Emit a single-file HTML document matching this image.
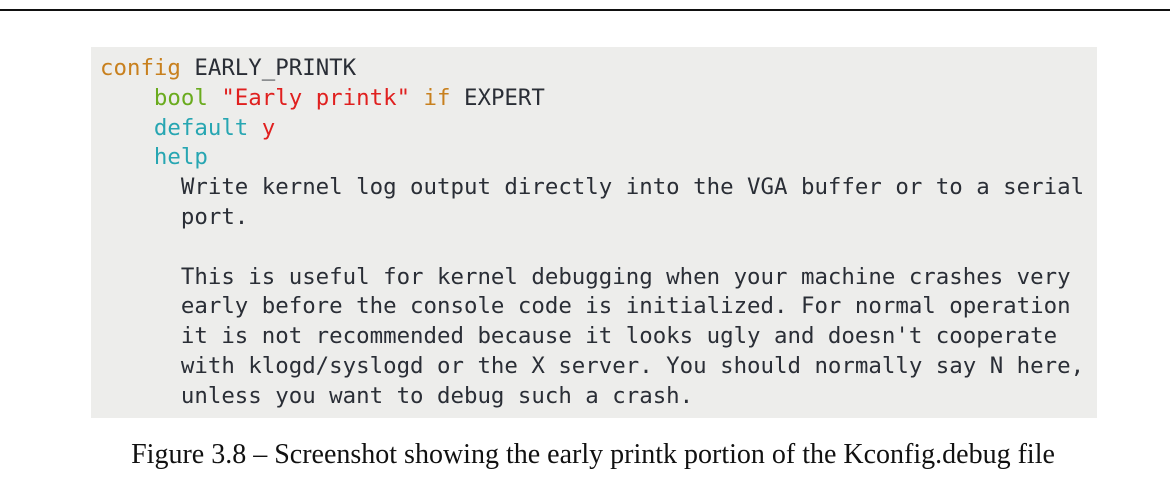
<!DOCTYPE html>
<html><head><style>
body{margin:0;width:1170px;height:477px;background:#fff;position:relative;overflow:hidden}
.line{position:absolute;left:0;top:9px;width:1170px;height:2px;background:#111}
.box{position:absolute;left:91px;top:47px;width:1006px;height:371px;background:#ededeb}
pre{position:absolute;left:100px;top:54px;margin:0;font-family:"DejaVu Sans Mono","Liberation Mono",monospace;font-size:22.4px;line-height:29.8px;color:#2a2e36}
.o{color:#c8801e}.g{color:#6aab1e}.r{color:#e0201f}.t{color:#27a6b2}
.cap{position:absolute;left:0;width:1186px;top:439px;text-align:center;font-family:"Liberation Serif",serif;font-size:28px;color:#111;white-space:nowrap}
</style></head><body>
<div class="line"></div>
<div class="box"></div>
<pre><span class="o">config</span> EARLY_PRINTK
    <span class="g">bool</span> <span class="r">"Early printk"</span> <span class="o">if</span> EXPERT
    <span class="t">default</span> <span class="r">y</span>
    <span class="t">help</span>
      Write kernel log output directly into the VGA buffer or to a serial
      port.

      This is useful for kernel debugging when your machine crashes very
      early before the console code is initialized. For normal operation
      it is not recommended because it looks ugly and doesn't cooperate
      with klogd/syslogd or the X server. You should normally say N here,
      unless you want to debug such a crash.</pre>
<div class="cap">Figure 3.8 – Screenshot showing the early printk portion of the Kconfig.debug file</div>
</body></html>
